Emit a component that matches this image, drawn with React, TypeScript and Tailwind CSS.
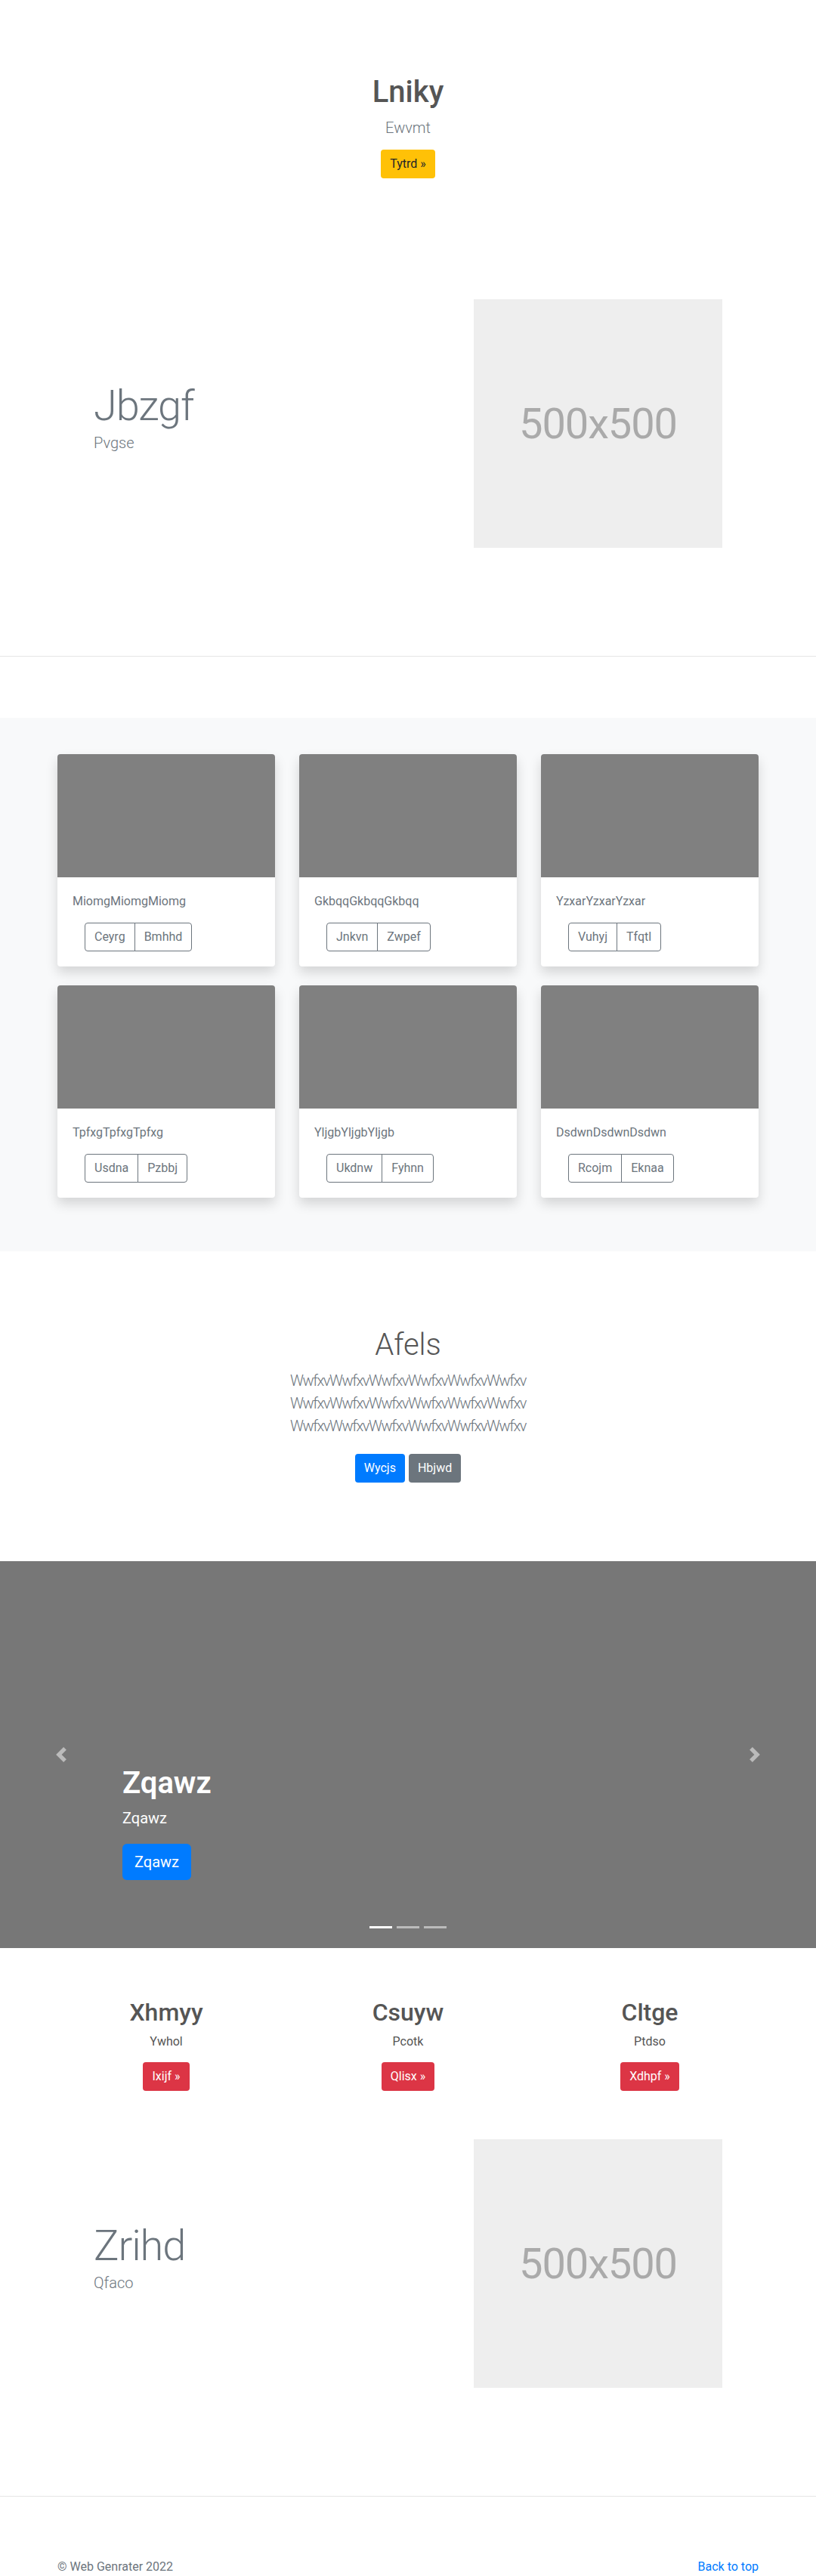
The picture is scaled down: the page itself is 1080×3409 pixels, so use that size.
import React from "react";

const cards = [
  { title: "MiomgMiomgMiomg", a: "Ceyrg", b: "Bmhhd" },
  { title: "GkbqqGkbqqGkbqq", a: "Jnkvn", b: "Zwpef" },
  { title: "YzxarYzxarYzxar", a: "Vuhyj", b: "Tfqtl" },
  { title: "TpfxgTpfxgTpfxg", a: "Usdna", b: "Pzbbj" },
  { title: "YljgbYljgbYljgb", a: "Ukdnw", b: "Fyhnn" },
  { title: "DsdwnDsdwnDsdwn", a: "Rcojm", b: "Eknaa" },
];

const features = [
  { h: "Xhmyy", p: "Ywhol", b: "Ixijf »" },
  { h: "Csuyw", p: "Pcotk", b: "Qlisx »" },
  { h: "Cltge", p: "Ptdso", b: "Xdhpf »" },
];

function Feature({ title, sub, pt }: { title: string; sub: string; pt: string }) {
  return (
    <section className={`mx-auto flex max-w-[960px] items-center justify-between px-[64px] pb-[143px] ${pt}`}>
      <div>
        <h2 className="text-[56px] font-light leading-[67px] tracking-[-0.02em] text-[#6c757d]">{title}</h2>
        <p className="mb-4 text-xl font-light leading-[30px] text-[#6c757d]">{sub}</p>
      </div>
      <div className="flex h-[329px] w-[329px] items-center justify-center bg-[#eeeeee] text-[56px] tracking-[-0.02em] text-[#aaaaaa]">
        500x500
      </div>
    </section>
  );
}

export default function App() {
  const line = "WwfxvWwfxvWwfxvWwfxvWwfxvWwfxv";
  return (
    <div className="bg-white font-[Roboto] text-[#212529]">
      {/* hero */}
      <section className="flex flex-col items-center pt-[98px] text-center">
        <h1 className="mb-2 text-[40px] font-medium leading-[48px] text-[#555555]">Lniky</h1>
        <p className="mb-[14px] text-xl font-light leading-[30px] text-[#6c757d]">Ewvmt</p>
        <a className="flex h-[38px] items-center rounded bg-[#ffc107] px-3 text-base text-[#212529]">Tytrd »</a>
      </section>

      <Feature title="Jbzgf" sub="Pvgse" pt="pt-[160px]" />
      <hr className="border-0 border-t border-[#e6e6e6]" />

      {/* cards */}
      <section className="mt-[81px] bg-[#f8f9fa] pb-[71px] pt-12">
        <div className="mx-auto grid max-w-[960px] grid-cols-3 gap-x-8 gap-y-[25px] px-4">
          {cards.map((c) => (
            <div key={c.title} className="overflow-hidden rounded bg-white shadow-[0_8px_16px_rgba(0,0,0,0.15)]">
              <div className="h-[163px] bg-[#808080]" />
              <div className="p-5">
                <p className="mb-4 text-base leading-6 text-[#6c757d]">{c.title}</p>
                <div className="ml-4 inline-flex">
                  <button className="flex h-[38px] items-center rounded-l border border-[#6c757d] px-3 text-base text-[#6c757d]">
                    {c.a}
                  </button>
                  <button className="-ml-px flex h-[38px] items-center rounded-r border border-[#6c757d] px-3 text-base text-[#6c757d]">
                    {c.b}
                  </button>
                </div>
              </div>
            </div>
          ))}
        </div>
      </section>

      {/* jumbotron */}
      <section className="pb-[104px] pt-[100px] text-center">
        <h1 className="mb-2 text-[40px] font-light leading-[48px] text-[#555555]">Afels</h1>
        <p className="text-xl font-light leading-[30px] tracking-[-0.07em] text-[#6c757d]">
          {line}
          <br />
          {line}
          <br />
          {line}
        </p>
        <div className="mt-[22px] flex justify-center gap-[5px]">
          <button className="flex h-[38px] items-center rounded bg-[#007bff] px-3 text-base text-white">Wycjs</button>
          <button className="flex h-[38px] items-center rounded bg-[#6c757d] px-3 text-base text-white">Hbjwd</button>
        </div>
      </section>

      {/* carousel */}
      <section className="relative flex h-[512px] flex-col justify-end bg-[#777777] pb-[90px] pl-[15%] text-white">
        <h1 className="mb-2 text-[40px] font-semibold leading-[48px]">Zqawz</h1>
        <p className="mb-5 text-xl leading-[28px]">Zqawz</p>
        <div>
          <a className="inline-flex h-[48px] items-center rounded-md bg-[#007bff] px-4 text-xl text-white">Zqawz</a>
        </div>
        <svg className="absolute left-[71px] top-[246px] h-5 w-5 opacity-50" viewBox="0 0 8 8" fill="#fff">
          <path d="M5.25 0l-4 4 4 4 1.5-1.5L4.25 4l2.5-2.5L5.25 0z" />
        </svg>
        <svg className="absolute right-[71px] top-[246px] h-5 w-5 opacity-50" viewBox="0 0 8 8" fill="#fff">
          <path d="M2.75 0l-1.5 1.5L3.75 4l-2.5 2.5L2.75 8l4-4-4-4z" />
        </svg>
        <div className="absolute bottom-[26px] left-1/2 flex -translate-x-1/2 gap-[6px]">
          <span className="h-[3px] w-[30px] bg-white" />
          <span className="h-[3px] w-[30px] bg-white opacity-50" />
          <span className="h-[3px] w-[30px] bg-white opacity-50" />
        </div>
      </section>

      {/* three columns */}
      <section className="mx-auto grid max-w-[960px] grid-cols-3 pt-[66px] text-center">
        {features.map((f) => (
          <div key={f.h} className="flex flex-col items-center">
            <h2 className="mb-2 text-[32px] font-medium leading-[38px] text-[#555555]">{f.h}</h2>
            <p className="mb-[15px] text-base leading-6 text-[#555555]">{f.p}</p>
            <a className="flex h-[38px] items-center rounded bg-[#dc3545] px-3 text-base text-white">{f.b}</a>
          </div>
        ))}
      </section>

      <Feature title="Zrihd" sub="Qfaco" pt="pt-[64px]" />
      <hr className="border-0 border-t border-[#e6e6e6]" />

      {/* footer */}
      <footer className="mx-auto flex max-w-[960px] justify-between px-4 pt-[81px] text-base leading-6">
        <p className="text-[#6c757d]">© Web Genrater 2022</p>
        <a className="text-[#007bff]">Back to top</a>
      </footer>
    </div>
  );
}
